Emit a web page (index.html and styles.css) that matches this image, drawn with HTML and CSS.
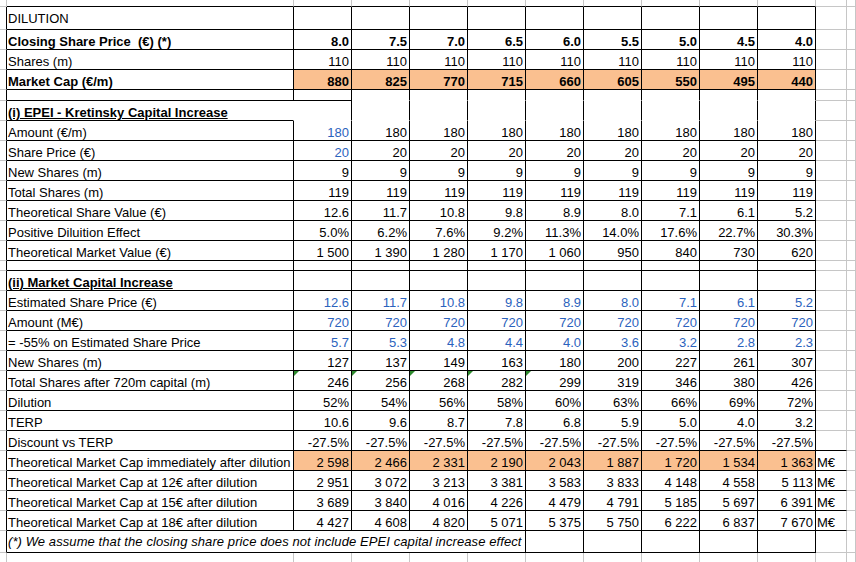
FILE: index.html
```html
<!DOCTYPE html>
<html>
<head>
<meta charset="utf-8">
<link rel="stylesheet" href="styles.css">
</head>
<body>
<div class="sheet">
  <!-- row 0: top gridline strip -->
  <div class="x g"></div><div class="x gr"></div>
  <div class="x gr"></div><div class="x gr"></div><div class="x gr"></div><div class="x gr"></div><div class="x gr"></div><div class="x gr"></div><div class="x gr"></div><div class="x gr"></div><div class="x gr"></div>
  <div class="x g"></div><div class="x g"></div>

  <!-- row 1 -->
  <div class="x s"></div><div class="x l mid">DILUTION</div>
  <div class="x"></div><div class="x"></div><div class="x"></div><div class="x"></div><div class="x"></div><div class="x"></div><div class="x"></div><div class="x"></div><div class="x"></div>
  <div class="x g"></div><div class="x g"></div>

  <!-- row 2 -->
  <div class="x s"></div><div class="x l b pre">Closing Share Price  (€) (*)</div>
  <div class="x n b">8.0</div><div class="x n b">7.5</div><div class="x n b">7.0</div><div class="x n b">6.5</div><div class="x n b">6.0</div><div class="x n b">5.5</div><div class="x n b">5.0</div><div class="x n b">4.5</div><div class="x n b">4.0</div>
  <div class="x g"></div><div class="x g"></div>

  <!-- row 3 -->
  <div class="x s"></div><div class="x l">Shares (m)</div>
  <div class="x n">110</div><div class="x n">110</div><div class="x n">110</div><div class="x n">110</div><div class="x n">110</div><div class="x n">110</div><div class="x n">110</div><div class="x n">110</div><div class="x n">110</div>
  <div class="x g"></div><div class="x g"></div>

  <!-- row 4 -->
  <div class="x s"></div><div class="x l b">Market Cap (€/m)</div>
  <div class="x n b or">880</div><div class="x n b or">825</div><div class="x n b or">770</div><div class="x n b or">715</div><div class="x n b or">660</div><div class="x n b or">605</div><div class="x n b or">550</div><div class="x n b or">495</div><div class="x n b or">440</div>
  <div class="x g"></div><div class="x g"></div>

  <!-- row 5: blank -->
  <div class="x s"></div><div class="x l"></div>
  <div class="x"></div><div class="x nb"></div><div class="x nb"></div><div class="x nb"></div><div class="x nb"></div><div class="x nb"></div><div class="x nb"></div><div class="x nb"></div><div class="x nb"></div>
  <div class="x g"></div><div class="x g"></div>

  <!-- row 6: section (i) header -->
  <div class="x s"></div><div class="x l nr"><span class="head">(i) EPEI - Kretinsky Capital Increase</span></div>
  <div class="x nb"></div><div class="x nb"></div><div class="x nb"></div><div class="x nb"></div><div class="x nb"></div><div class="x nb"></div><div class="x nb"></div><div class="x nb"></div><div class="x nb"></div>
  <div class="x g"></div><div class="x g"></div>

  <!-- row 7 -->
  <div class="x s"></div><div class="x l">Amount (€/m)</div>
  <div class="x n blue">180</div><div class="x n">180</div><div class="x n">180</div><div class="x n">180</div><div class="x n">180</div><div class="x n">180</div><div class="x n">180</div><div class="x n">180</div><div class="x n">180</div>
  <div class="x g"></div><div class="x g"></div>

  <!-- row 8 -->
  <div class="x s"></div><div class="x l">Share Price (€)</div>
  <div class="x n blue">20</div><div class="x n">20</div><div class="x n">20</div><div class="x n">20</div><div class="x n">20</div><div class="x n">20</div><div class="x n">20</div><div class="x n">20</div><div class="x n">20</div>
  <div class="x g"></div><div class="x g"></div>

  <!-- row 9 -->
  <div class="x s"></div><div class="x l">New Shares (m)</div>
  <div class="x n">9</div><div class="x n">9</div><div class="x n">9</div><div class="x n">9</div><div class="x n">9</div><div class="x n">9</div><div class="x n">9</div><div class="x n">9</div><div class="x n">9</div>
  <div class="x g"></div><div class="x g"></div>

  <!-- row 10 -->
  <div class="x s"></div><div class="x l">Total Shares (m)</div>
  <div class="x n">119</div><div class="x n">119</div><div class="x n">119</div><div class="x n">119</div><div class="x n">119</div><div class="x n">119</div><div class="x n">119</div><div class="x n">119</div><div class="x n">119</div>
  <div class="x g"></div><div class="x g"></div>

  <!-- row 11 -->
  <div class="x s"></div><div class="x l">Theoretical Share Value (€)</div>
  <div class="x n">12.6</div><div class="x n">11.7</div><div class="x n">10.8</div><div class="x n">9.8</div><div class="x n">8.9</div><div class="x n">8.0</div><div class="x n">7.1</div><div class="x n">6.1</div><div class="x n">5.2</div>
  <div class="x g"></div><div class="x g"></div>

  <!-- row 12 -->
  <div class="x s"></div><div class="x l">Positive Diluition Effect</div>
  <div class="x n">5.0%</div><div class="x n">6.2%</div><div class="x n">7.6%</div><div class="x n">9.2%</div><div class="x n">11.3%</div><div class="x n">14.0%</div><div class="x n">17.6%</div><div class="x n">22.7%</div><div class="x n">30.3%</div>
  <div class="x g"></div><div class="x g"></div>

  <!-- row 13 -->
  <div class="x s"></div><div class="x l">Theoretical Market Value (€)</div>
  <div class="x n">1 500</div><div class="x n">1 390</div><div class="x n">1 280</div><div class="x n">1 170</div><div class="x n">1 060</div><div class="x n">950</div><div class="x n">840</div><div class="x n">730</div><div class="x n">620</div>
  <div class="x g"></div><div class="x g"></div>

  <!-- row 14: blank -->
  <div class="x s"></div><div class="x l"></div>
  <div class="x"></div><div class="x"></div><div class="x"></div><div class="x"></div><div class="x"></div><div class="x"></div><div class="x"></div><div class="x"></div><div class="x"></div>
  <div class="x g"></div><div class="x g"></div>

  <!-- row 15: section (ii) header -->
  <div class="x s"></div><div class="x l"><span class="head">(ii) Market Capital Increase</span></div>
  <div class="x"></div><div class="x"></div><div class="x"></div><div class="x"></div><div class="x"></div><div class="x"></div><div class="x"></div><div class="x"></div><div class="x"></div>
  <div class="x g"></div><div class="x g"></div>

  <!-- row 16 -->
  <div class="x s"></div><div class="x l">Estimated Share Price (€)</div>
  <div class="x n blue">12.6</div><div class="x n blue">11.7</div><div class="x n blue">10.8</div><div class="x n blue">9.8</div><div class="x n blue">8.9</div><div class="x n blue">8.0</div><div class="x n blue">7.1</div><div class="x n blue">6.1</div><div class="x n blue">5.2</div>
  <div class="x g"></div><div class="x g"></div>

  <!-- row 17 -->
  <div class="x s"></div><div class="x l">Amount (M€)</div>
  <div class="x n blue">720</div><div class="x n blue">720</div><div class="x n blue">720</div><div class="x n blue">720</div><div class="x n blue">720</div><div class="x n blue">720</div><div class="x n blue">720</div><div class="x n blue">720</div><div class="x n blue">720</div>
  <div class="x g"></div><div class="x g"></div>

  <!-- row 18 -->
  <div class="x s"></div><div class="x l">= -55% on Estimated Share Price</div>
  <div class="x n blue">5.7</div><div class="x n blue">5.3</div><div class="x n blue">4.8</div><div class="x n blue">4.4</div><div class="x n blue">4.0</div><div class="x n blue">3.6</div><div class="x n blue">3.2</div><div class="x n blue">2.8</div><div class="x n blue">2.3</div>
  <div class="x g"></div><div class="x g"></div>

  <!-- row 19 -->
  <div class="x s"></div><div class="x l">New Shares (m)</div>
  <div class="x n">127</div><div class="x n">137</div><div class="x n">149</div><div class="x n">163</div><div class="x n">180</div><div class="x n">200</div><div class="x n">227</div><div class="x n">261</div><div class="x n">307</div>
  <div class="x g"></div><div class="x g"></div>

  <!-- row 20 -->
  <div class="x s"></div><div class="x l">Total Shares after 720m capital (m)</div>
  <div class="x n tri">246</div><div class="x n tri">256</div><div class="x n tri">268</div><div class="x n tri">282</div><div class="x n tri">299</div><div class="x n">319</div><div class="x n">346</div><div class="x n">380</div><div class="x n">426</div>
  <div class="x g"></div><div class="x g"></div>

  <!-- row 21 -->
  <div class="x s"></div><div class="x l">Dilution</div>
  <div class="x n">52%</div><div class="x n">54%</div><div class="x n">56%</div><div class="x n">58%</div><div class="x n">60%</div><div class="x n">63%</div><div class="x n">66%</div><div class="x n">69%</div><div class="x n">72%</div>
  <div class="x g"></div><div class="x g"></div>

  <!-- row 22 -->
  <div class="x s"></div><div class="x l">TERP</div>
  <div class="x n">10.6</div><div class="x n">9.6</div><div class="x n">8.7</div><div class="x n">7.8</div><div class="x n">6.8</div><div class="x n">5.9</div><div class="x n">5.0</div><div class="x n">4.0</div><div class="x n">3.2</div>
  <div class="x g"></div><div class="x g"></div>

  <!-- row 23 -->
  <div class="x s"></div><div class="x l">Discount vs TERP</div>
  <div class="x n">-27.5%</div><div class="x n">-27.5%</div><div class="x n">-27.5%</div><div class="x n">-27.5%</div><div class="x n">-27.5%</div><div class="x n">-27.5%</div><div class="x n">-27.5%</div><div class="x n">-27.5%</div><div class="x n">-27.5%</div>
  <div class="x gr"></div><div class="x g"></div>

  <!-- row 24 -->
  <div class="x s"></div><div class="x l">Theoretical Market Cap immediately after dilution</div>
  <div class="x n or">2 598</div><div class="x n or">2 466</div><div class="x n or">2 331</div><div class="x n or">2 190</div><div class="x n or">2 043</div><div class="x n or">1 887</div><div class="x n or">1 720</div><div class="x n or">1 534</div><div class="x n or">1 363</div>
  <div class="x gr l">M€</div><div class="x g"></div>

  <!-- row 25 -->
  <div class="x s"></div><div class="x l">Theoretical Market Cap at 12€ after dilution</div>
  <div class="x n">2 951</div><div class="x n">3 072</div><div class="x n">3 213</div><div class="x n">3 381</div><div class="x n">3 583</div><div class="x n">3 833</div><div class="x n">4 148</div><div class="x n">4 558</div><div class="x n">5 113</div>
  <div class="x gr l">M€</div><div class="x g"></div>

  <!-- row 26 -->
  <div class="x s"></div><div class="x l">Theoretical Market Cap at 15€ after dilution</div>
  <div class="x n">3 689</div><div class="x n">3 840</div><div class="x n">4 016</div><div class="x n">4 226</div><div class="x n">4 479</div><div class="x n">4 791</div><div class="x n">5 185</div><div class="x n">5 697</div><div class="x n">6 391</div>
  <div class="x gr l">M€</div><div class="x g"></div>

  <!-- row 27 -->
  <div class="x s"></div><div class="x l">Theoretical Market Cap at 18€ after dilution</div>
  <div class="x n">4 427</div><div class="x n">4 608</div><div class="x n">4 820</div><div class="x n">5 071</div><div class="x n">5 375</div><div class="x n">5 750</div><div class="x n">6 222</div><div class="x n">6 837</div><div class="x n">7 670</div>
  <div class="x gr l">M€</div><div class="x g"></div>

  <!-- row 28: footnote -->
  <div class="x s"></div><div class="x l mid it note">(*) We assume that the closing share price does not include EPEI capital increase effect</div>
  <div class="x"></div><div class="x"></div><div class="x"></div><div class="x"></div><div class="x"></div>
  <div class="x g"></div><div class="x g"></div>

  <!-- row 29: gridlines below -->
  <div class="x g"></div><div class="x g"></div>
  <div class="x g"></div><div class="x g"></div><div class="x g"></div><div class="x g"></div><div class="x g"></div><div class="x g"></div><div class="x g"></div><div class="x g"></div><div class="x g"></div>
  <div class="x g"></div><div class="x g"></div>
</div>
</body>
</html>
```
FILE: styles.css
```css
html, body {
  margin: 0;
  padding: 0;
  background: #ffffff;
  overflow: hidden;
}

body {
  font-family: "Liberation Sans", Arial, sans-serif;
  font-size: 13px;
  color: #000000;
}

.sheet {
  display: grid;
  grid-template-columns: 7px 287px repeat(9, 58px) 31px 9px;
  grid-template-rows:
    7px 23px 20px 20px 20px 11px 20px
    repeat(7, 20px)
    10px 20px
    repeat(12, 20px)
    22px 10px;
  width: 856px;
}

.x {
  box-sizing: border-box;
  border-right: 1px solid #000000;
  border-bottom: 1px solid #000000;
  display: flex;
  align-items: flex-end;
  padding: 0 2px 0 1px;
  line-height: 15px;
  white-space: nowrap;
  min-width: 0;
  position: relative;
}

/* gridline-only cells */
.g {
  border-right-color: #c6c6c6;
  border-bottom-color: #c6c6c6;
}
.gr { border-right-color: #c6c6c6; }
.s { border-bottom-color: #c6c6c6; }
.nb { border-bottom-color: transparent; }
.nr { border-right-color: transparent; }

.l { justify-content: flex-start; }
.n { justify-content: flex-end; }
.mid { align-items: center; }
.pre { white-space: pre; }

.b { font-weight: bold; }
.it { font-style: italic; }
.blue { color: #2b62bd; }
.or { background: #fac090; }

.head {
  font-weight: bold;
  text-decoration: underline;
}

.note {
  grid-column: span 5;
  letter-spacing: 0.09px;
}

/* Excel error indicator */
.tri::before {
  content: "";
  position: absolute;
  top: 0;
  left: 0;
  width: 0;
  height: 0;
  border-top: 5px solid #2e8b2e;
  border-right: 5px solid transparent;
}
```
